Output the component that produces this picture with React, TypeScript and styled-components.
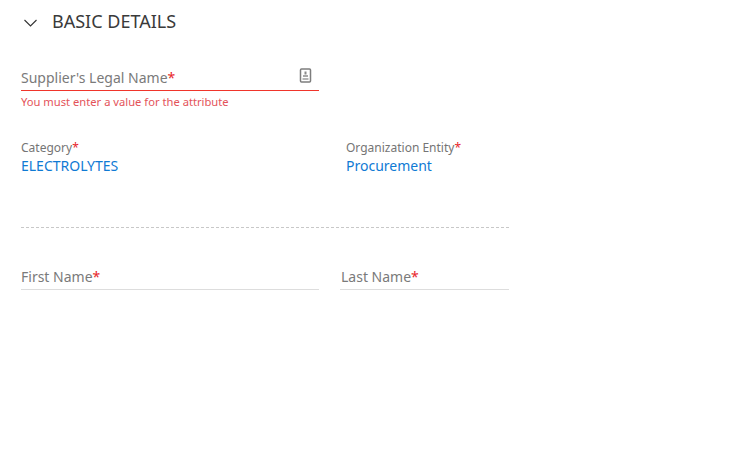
import React from 'react';
import styled, { createGlobalStyle } from 'styled-components';

const GlobalStyle = createGlobalStyle`
  html, body {
    margin: 0;
    padding: 0;
    background: #fff;
    font-family: "Noto Sans", "Open Sans", sans-serif;
  }
`;

const Page = styled.main`
  width: 488px;
  padding: 0 0 0 21px;
  height: 469px;
`;

const SectionHeader = styled.header`
  display: flex;
  align-items: center;
  height: 42px;
  gap: 15px;
  padding-left: 3px;
`;

const Chevron = styled.svg`
  width: 13px;
  height: 8px;
  margin-top: 4px;
  fill: none;
  stroke: #333;
  stroke-width: 1.1;
`;

const SectionTitle = styled.h2`
  margin: 0;
  font-size: 18px;
  font-weight: 400;
  color: #3a3a3a;
`;

const LegalField = styled.div`
  margin-top: 23px;
  width: 298px;
`;

const InputLine = styled.div<{ $error?: boolean }>`
  display: flex;
  align-items: center;
  justify-content: space-between;
  height: 26px;
  box-sizing: border-box;
  border-bottom: 1px solid ${({ $error }) => ($error ? '#f0352b' : '#ddd')};
`;

const Placeholder = styled.span`
  font-size: 14px;
  color: #7a7a7a;
  line-height: 19px;
`;

const Star = styled.span`
  color: #e8262b;
`;

const FileIcon = styled.svg`
  width: 13px;
  height: 15px;
  margin: 0 7px 4px 0;
`;

const ErrorText = styled.div`
  margin-top: 3px;
  font-size: 11.2px;
  line-height: 15px;
  color: #e4535a;
`;

const ValueRow = styled.div`
  display: grid;
  grid-template-columns: 325px 1fr;
  margin-top: 31px;
`;

const LabelText = styled.div`
  font-size: 12px;
  line-height: 16px;
  color: #757575;
`;

const ValueText = styled.div`
  font-size: 14px;
  line-height: 20px;
  color: #0f7ad4;
`;

const Divider = styled.hr`
  margin: 51px 0 0;
  border: 0;
  border-top: 1px dashed #c8c8c8;
`;

const NameRow = styled.div`
  display: grid;
  grid-template-columns: 298px 1fr;
  column-gap: 21px;
  margin-top: 36px;
`;

const LastNameText = styled(Placeholder)`
  padding-left: 1px;
`;

export default function App() {
  return (
    <Page>
      <GlobalStyle />
      <SectionHeader>
        <Chevron viewBox="0 0 13 8">
          <path d="M0.5 1 L6.5 7 L12.5 1" />
        </Chevron>
        <SectionTitle>BASIC DETAILS</SectionTitle>
      </SectionHeader>

      <LegalField>
        <InputLine $error>
          <Placeholder>
            Supplier's Legal Name<Star>*</Star>
          </Placeholder>
          <FileIcon viewBox="0 0 13 15">
            <rect x="1.5" y="1" width="10" height="13" rx="1" fill="none" stroke="#7d7d7d" strokeWidth="1.5" />
            <path d="M6.5 3.5 L6.5 6.5" stroke="#8a8a8a" strokeWidth="2" />
            <rect x="4" y="7" width="5" height="2" fill="#a8a8a8" />
            <rect x="3.5" y="10" width="6" height="2" fill="#b5b5b5" />
          </FileIcon>
        </InputLine>
        <ErrorText>You must enter a value for the attribute</ErrorText>
      </LegalField>

      <ValueRow>
        <div>
          <LabelText>
            Category<Star>*</Star>
          </LabelText>
          <ValueText>ELECTROLYTES</ValueText>
        </div>
        <div>
          <LabelText>
            Organization Entity<Star>*</Star>
          </LabelText>
          <ValueText>Procurement</ValueText>
        </div>
      </ValueRow>

      <Divider />

      <NameRow>
        <InputLine>
          <Placeholder>
            First Name<Star>*</Star>
          </Placeholder>
        </InputLine>
        <InputLine>
          <LastNameText>
            Last Name<Star>*</Star>
          </LastNameText>
        </InputLine>
      </NameRow>
    </Page>
  );
}
